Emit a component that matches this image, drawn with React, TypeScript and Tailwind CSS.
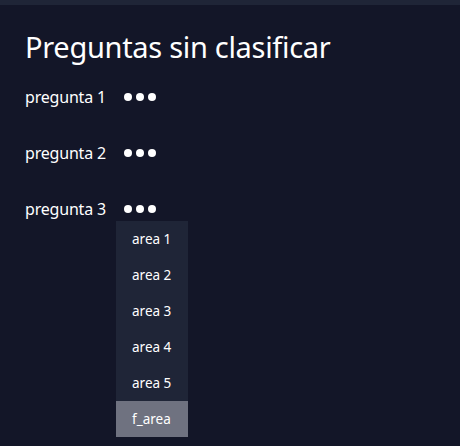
import React from "react";

function Dots() {
  return (
    <svg width="32" height="8" viewBox="0 0 32 8" className="block">
      <circle cx="4" cy="4" r="4" fill="#ffffff" />
      <circle cx="16" cy="4" r="4" fill="#ffffff" />
      <circle cx="28" cy="4" r="4" fill="#ffffff" />
    </svg>
  );
}

const areas = ["area 1", "area 2", "area 3", "area 4", "area 5", "f_area"];

export default function App() {
  const rows = ["pregunta 1", "pregunta 2", "pregunta 3"];
  return (
    <div
      className="w-[460px] h-[446px] bg-[#131628] text-white overflow-hidden flex flex-col"
      style={{ fontFamily: '"Noto Sans", "Open Sans", sans-serif' }}
    >
      <div className="h-[5px] bg-[#1f2537] shrink-0" />
      <div className="pl-[25px] pr-6 pt-6">
        <h1 className="text-[29px] leading-[36px] font-normal tracking-[-0.3px] whitespace-nowrap">
          Preguntas sin clasificar
        </h1>
        <ul className="mt-1 flex flex-col">
          {rows.map((r, i) => (
            <li key={r} className="flex items-center py-4 h-[56px]">
              <span className="text-base leading-6 w-[91px] tracking-[-0.2px] whitespace-nowrap">{r}</span>
              <div className="relative">
                <button className="flex items-center h-6 px-2">
                  <Dots />
                </button>
                {i === 2 && (
                  <div className="absolute left-0 top-full w-[72px] bg-[#1f2537] flex flex-col z-10">
                    {areas.map((a) => (
                      <div
                        key={a}
                        className={
                          "px-4 py-2 text-[13.5px] leading-5 whitespace-nowrap " +
                          (a === "f_area" ? "bg-[#6f7280]" : "")
                        }
                      >
                        {a}
                      </div>
                    ))}
                  </div>
                )}
              </div>
            </li>
          ))}
        </ul>
      </div>
    </div>
  );
}
